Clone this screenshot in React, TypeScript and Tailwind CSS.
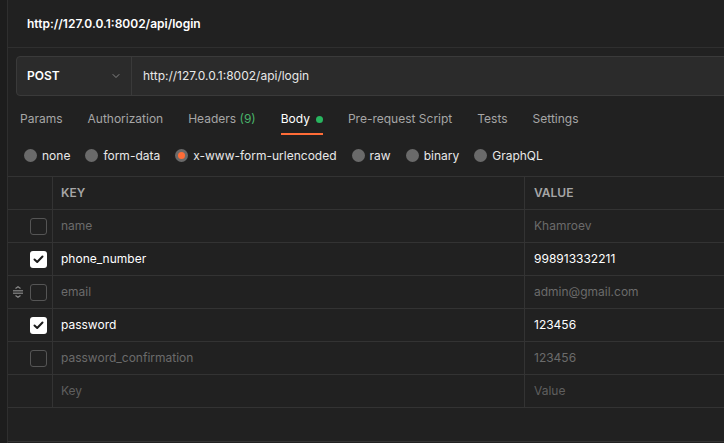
import { ChevronDown } from "lucide-react";

const tabs = [
    { name: "Params" },
    { name: "Authorization" },
    { name: "Headers", count: "(9)" },
    { name: "Body", active: true },
    { name: "Pre-request Script" },
    { name: "Tests" },
    { name: "Settings" },
];

const bodyTypes = [
    { name: "none" },
    { name: "form-data" },
    { name: "x-www-form-urlencoded", selected: true },
    { name: "raw" },
    { name: "binary" },
    { name: "GraphQL" },
];

const rows = [
    { key: "name", value: "Khamroev", on: false },
    { key: "phone_number", value: "998913332211", on: true },
    { key: "email", value: "admin@gmail.com", on: false, hover: true },
    { key: "password", value: "123456", on: true },
    { key: "password_confirmation", value: "123456", on: false },
];

function DragHandle() {
    return (
        <svg width="12" height="12" viewBox="0 0 12 12" fill="none" stroke="#8a8a8a" strokeWidth="1.2">
            <path d="M3.5 2.5 L6 0.8 L8.5 2.5" />
            <path d="M1 4.8 H11" />
            <path d="M1 7.2 H11" />
            <path d="M3.5 9.5 L6 11.2 L8.5 9.5" />
        </svg>
    );
}

function Checkbox({ on }: { on: boolean }) {
    if (on) {
        return (
            <div className="w-[17px] h-[17px] rounded-[3px] bg-white flex items-center justify-center">
                <svg width="11" height="9" viewBox="0 0 11 9" fill="none" stroke="#1a1a1a" strokeWidth="2" strokeLinecap="round" strokeLinejoin="round">
                    <path d="M1.5 4.5 L4.2 7 L9.5 1.5" />
                </svg>
            </div>
        );
    }
    return <div className="w-[17px] h-[17px] rounded-[3px] border border-[#555555]" />;
}

export default function App() {
    return (
        <div
            className="flex w-[724px] h-[443px] overflow-hidden bg-[#212121] text-[12px]"
            style={{ fontFamily: "Inter, 'Noto Sans', sans-serif" }}
        >
            {/* Left rail */}
            <div className="w-[8px] shrink-0 bg-[#1d1d1d] border-r border-[#2f2f2f]" />

            <div className="flex-1 flex flex-col min-w-0">
                {/* Title */}
                <div className="h-[48px] shrink-0 flex items-center pl-[19px] border-b border-[#2f2f2f]">
                    <span className="font-semibold text-white">http://127.0.0.1:8002/api/login</span>
                </div>

                {/* URL bar */}
                <div className="mt-[8px] ml-[8px] mr-[-12px] h-[40px] flex rounded-[4px] border border-[#3a3a3a] bg-[#2b2b2b]">
                    <div className="w-[115px] shrink-0 flex items-center justify-between pl-[10px] pr-[9px] border-r border-[#3a3a3a]">
                        <span className="font-semibold text-white">POST</span>
                        <ChevronDown className="w-[12px] h-[12px] text-[#9a9a9a]" strokeWidth={1.6} />
                    </div>
                    <div className="flex items-center pl-[11px] text-[#e8e8e8]">http://127.0.0.1:8002/api/login</div>
                </div>

                {/* Tabs */}
                <div className="flex gap-[25px] pl-[12px] pt-[13px]">
                    {tabs.map((t) => (
                        <div
                            key={t.name}
                            className={`flex items-center gap-[6px] pb-[4px] border-b-2 leading-[20px] ${
                                t.active ? "border-[#ff6c37] text-white" : "border-transparent text-[#a6a6a6]"
                            }`}
                        >
                            <span>
                                {t.name}
                                {t.count && <span className="text-[#49b36a]"> {t.count}</span>}
                            </span>
                            {t.active && <span className="w-[7px] h-[7px] rounded-full bg-[#28b55f]" />}
                        </div>
                    ))}
                </div>

                {/* Body types */}
                <div className="h-[41px] flex items-center gap-[15px] pl-4">
                    {bodyTypes.map((b) => (
                        <div key={b.name} className="flex items-center gap-[5px] text-[#e8e8e8]">
                            <span className="w-[13px] h-[13px] rounded-full bg-[#6a6a6a] flex items-center justify-center">
                                {b.selected && <span className="w-[7px] h-[7px] rounded-full bg-[#ff6c37]" />}
                            </span>
                            <span>{b.name}</span>
                        </div>
                    ))}
                </div>

                {/* Table */}
                <div className="border-t border-[#333333]">
                    <div className="flex h-[33px] border-b border-[#333333]">
                        <div className="w-[45px] shrink-0 border-r border-[#333333]" />
                        <div className="w-[472px] shrink-0 border-r border-[#333333] flex items-center pl-[8px] text-[12px] font-semibold text-[#a6a6a6]">
                            KEY
                        </div>
                        <div className="flex items-center pl-[9px] text-[12px] font-semibold text-[#a6a6a6]">VALUE</div>
                    </div>

                    {rows.map((r) => (
                        <div key={r.key} className="flex h-[33px] border-b border-[#333333]">
                            <div className="w-[45px] shrink-0 border-r border-[#333333] flex items-center pl-[4px] gap-[6px]">
                                <div className="w-[12px] flex items-center">{r.hover && <DragHandle />}</div>
                                <Checkbox on={r.on} />
                            </div>
                            <div
                                className={`w-[472px] shrink-0 border-r border-[#333333] flex items-center pl-[8px] ${
                                    r.on ? "text-white" : "text-[#6b6b6b]"
                                }`}
                            >
                                {r.key}
                            </div>
                            <div className={`flex items-center pl-[9px] ${r.on ? "text-white" : "text-[#6b6b6b]"}`}>{r.value}</div>
                        </div>
                    ))}

                    <div className="flex h-[33px] border-b border-[#333333]">
                        <div className="w-[45px] shrink-0 border-r border-[#333333]" />
                        <div className="w-[472px] shrink-0 border-r border-[#333333] flex items-center pl-[8px] text-[#5f5f5f]">Key</div>
                        <div className="flex items-center pl-[9px] text-[#5f5f5f]">Value</div>
                    </div>

                    <div className="h-[34px] border-b border-[#333333]" />
                </div>
            </div>
        </div>
    );
}
